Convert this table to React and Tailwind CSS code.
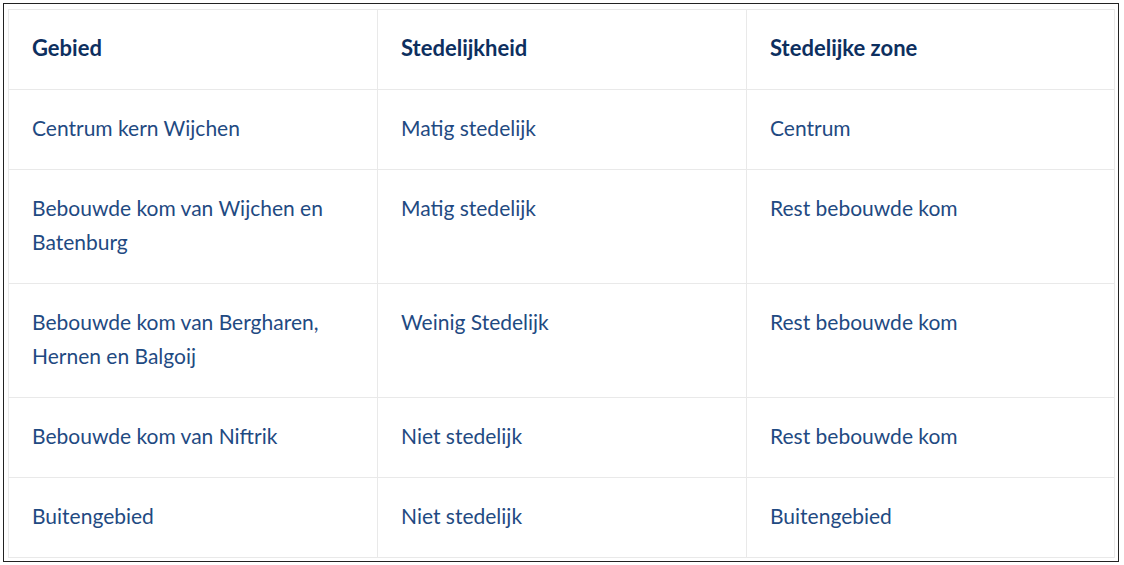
import React from "react";

const rows = [
  ["Centrum kern Wijchen", "Matig stedelijk", "Centrum"],
  ["Bebouwde kom van Wijchen en Batenburg", "Matig stedelijk", "Rest bebouwde kom"],
  ["Bebouwde kom van Bergharen, Hernen en Balgoij", "Weinig Stedelijk", "Rest bebouwde kom"],
  ["Bebouwde kom van Niftrik", "Niet stedelijk", "Rest bebouwde kom"],
  ["Buitengebied", "Niet stedelijk", "Buitengebied"],
];

export default function App() {
  return (
    <div className="w-[1124px] h-[565px] bg-white p-[3px]" style={{ fontFamily: "Lato, 'Open Sans', sans-serif" }}>
      <div className="w-[1116px] h-[559px] border border-[#222] pl-[4px] pt-[5px]">
        <table className="w-[1106px] border-collapse table-fixed text-[21px] leading-[34px] text-[#1f4a82]">
          <colgroup>
            <col className="w-[369px]" />
            <col className="w-[369px]" />
            <col className="w-[368px]" />
          </colgroup>
          <thead>
            <tr>
              {["Gebied", "Stedelijkheid", "Stedelijke zone"].map((h) => (
                <th key={h} className="border border-[#e9e9e9] text-left align-top font-bold text-[22px] text-[#0d2f5f] px-[23px] pt-[21px] pb-[24px]">
                  {h}
                </th>
              ))}
            </tr>
          </thead>
          <tbody>
            {rows.map((r, i) => (
              <tr key={i}>
                {r.map((c, j) => (
                  <td key={j} className="border border-[#e9e9e9] align-top px-[23px] pt-[21px] pb-[24px]">
                    {c}
                  </td>
                ))}
              </tr>
            ))}
          </tbody>
        </table>
      </div>
    </div>
  );
}
